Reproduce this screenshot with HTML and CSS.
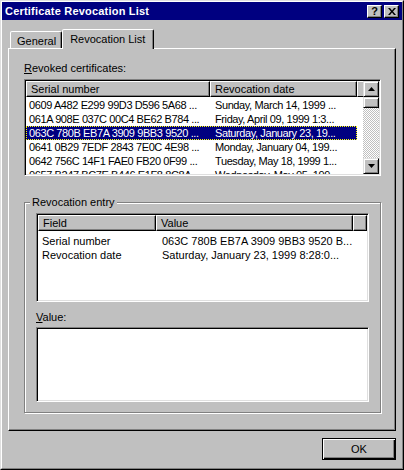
FILE: index.html
```html
<!DOCTYPE html>
<html>
<head>
<meta charset="utf-8">
<link rel="stylesheet" href="styles.css">
</head>
<body>
<div class="window">
  <div class="frame">
    <div class="titlebar">
      <span class="title">Certificate Revocation List</span>
      <div class="tbtns">
        <span class="tbtn">?</span>
        <span class="tbtn"><svg width="8" height="7" viewBox="0 0 8 7"><path d="M0 0h2l2 2.5 2-2.5h2l-3 3.5 3 3.5h-2l-2-2.5-2 2.5h-2l3-3.5z" fill="#000"/></svg></span>
      </div>
    </div>
    <div class="content">
      <div class="tabs">
        <div class="tab">General</div>
        <div class="tab active">Revocation List</div>
      </div>
      <div class="panel">
        <div class="label"><u>R</u>evoked certificates:</div>
        <div class="listbox">
          <div class="lv">
            <div class="lv-head">
              <div class="hcell h1">Serial number</div>
              <div class="hcell h2">Revocation date</div>
              <div class="hcell hfill"></div>
            </div>
            <div class="rows">
              <div class="row"><span class="c1">0609 A482 E299 99D3 D596 5A68 ...</span><span class="c2">Sunday, March 14, 1999 ...</span></div>
              <div class="row"><span class="c1">061A 908E 037C 00C4 BE62 B784 ...</span><span class="c2">Friday, April 09, 1999 1:3...</span></div>
              <div class="row sel"><span class="c1">063C 780B EB7A 3909 9BB3 9520 ...</span><span class="c2">Saturday, January 23, 19...</span></div>
              <div class="row"><span class="c1">0641 0B29 7EDF 2843 7E0C 4E98 ...</span><span class="c2">Monday, January 04, 199...</span></div>
              <div class="row"><span class="c1">0642 756C 14F1 FAE0 FB20 0F99 ...</span><span class="c2">Tuesday, May 18, 1999 1...</span></div>
              <div class="row"><span class="c1">0657 B247 BC7E B446 E1F8 8C8A ...</span><span class="c2">Wednesday, May 05, 199...</span></div>
            </div>
          </div>
          <div class="sb">
            <div class="sbtn"><svg width="7" height="4" viewBox="0 0 7 4"><path d="M3.5 0L7 4H0z" fill="#000"/></svg></div>
            <div class="thumb"></div>
            <div class="track"></div>
            <div class="sbtn"><svg width="7" height="4" viewBox="0 0 7 4"><path d="M0 0h7L3.5 4z" fill="#000"/></svg></div>
          </div>
        </div>
        <fieldset class="group">
          <legend>Revocation entry</legend>
          <div class="lv2">
            <div class="lv-head">
              <div class="hcell f1">Field</div>
              <div class="hcell f2">Value</div>
              <div class="hcell ffill"></div>
            </div>
            <div class="rows2">
              <div class="row"><span class="d1">Serial number</span><span class="d2">063C 780B EB7A 3909 9BB3 9520 B...</span></div>
              <div class="row"><span class="d1">Revocation date</span><span class="d2">Saturday, January 23, 1999 8:28:0...</span></div>
            </div>
          </div>
          <div class="label vlabel"><u>V</u>alue:</div>
          <div class="textbox"></div>
        </fieldset>
      </div>
      <div class="footer">
        <button class="ok">OK</button>
      </div>
    </div>
  </div>
</div>
</body>
</html>
```
FILE: styles.css
```css
* { box-sizing: border-box; }
body {
  margin: 0;
  background: #c0c0c0;
  font-family: "Liberation Sans", Arial, sans-serif;
  font-size: 11px;
  color: #000;
}
.window {
  width: 404px;
  height: 470px;
  border: 1px solid;
  border-color: #dfdfdf #000 #000 #dfdfdf;
  background: #c0c0c0;
}
.frame {
  height: 100%;
  border: 1px solid;
  border-color: #fff #808080 #808080 #fff;
  display: flex;
  flex-direction: column;
}
.titlebar {
  height: 18px;
  background: #000080;
  color: #fff;
  display: flex;
  align-items: center;
  justify-content: space-between;
  padding: 0 3px 0 3px;
}
.title { font-weight: bold; font-size: 11px; letter-spacing: 0.2px; }
.tbtns { display: flex; gap: 2px; }
.tbtn {
  width: 15px;
  height: 13px;
  background: #c0c0c0;
  border: 1px solid;
  border-color: #fff #000 #000 #fff;
  box-shadow: inset -1px -1px #808080;
  display: flex;
  align-items: center;
  justify-content: center;
  color: #000;
  font-weight: bold;
  font-size: 11px;
  line-height: 11px;
}
.content {
  flex: 1;
  padding: 9px 6px 0 6px;
  display: flex;
  flex-direction: column;
}
.tabs {
  display: flex;
  align-items: flex-end;
  height: 19px;
  padding-left: 2px;
  position: relative;
  z-index: 1;
}
.tab {
  height: 17px;
  padding: 2px 5px 0 6px;
  border: 1px solid;
  border-bottom: none;
  border-color: #fff #000 transparent #fff;
  box-shadow: inset -1px 0 #808080;
  border-radius: 2px 2px 0 0;
  display: flex;
  align-items: center;
  background: #c0c0c0;
}
.tab.active {
  height: 20px;
  margin-bottom: -1px;
  padding: 0 8px 1px 7px;
}
.panel {
  height: 383px;
  border: 1px solid;
  border-color: #fff #000 #000 #fff;
  box-shadow: inset -1px -1px #808080;
  padding: 13px 13px 0 15px;
}
.label { line-height: 13px; height: 13px; }
.listbox {
  margin-top: 4px;
  height: 97px;
  width: 357px;
  border: 1px solid;
  border-color: #808080 #fff #fff #808080;
  box-shadow: inset 1px 1px #000, inset -1px -1px #dfdfdf;
  padding: 1px;
  display: flex;
  background: #fff;
}
.lv { flex: 1; overflow: hidden; }
.lv-head { display: flex; height: 16px; }
.hcell {
  flex: none;
  height: 16px;
  background: #c0c0c0;
  border: 1px solid;
  border-color: #fff #000 #000 #fff;
  box-shadow: inset -1px -1px #808080;
  line-height: 14px;
  padding-left: 4px;
  white-space: nowrap;
}
.h1 { width: 184px; }
.h2 { width: 147px; }
.hfill { flex: 1; border-right: none; box-shadow: none; }
.rows { padding-top: 1px; letter-spacing: -0.4px; }
.row { display: flex; height: 14px; line-height: 14px; white-space: nowrap; }
.row span { flex: none; overflow: hidden; }
.c1 { width: 184px; padding-left: 3px; }
.c2 { width: 147px; padding-left: 5px; }
.row.sel {
  width: 331px;
  background: #000080;
  color: #fff;
  outline: 1px dotted #ffff00;
  outline-offset: -1px;
}
.sb { width: 16px; display: flex; flex-direction: column; }
.sbtn, .thumb {
  width: 16px;
  height: 16px;
  background: #c0c0c0;
  border: 1px solid;
  border-color: #dfdfdf #000 #000 #dfdfdf;
  box-shadow: inset 1px 1px #fff, inset -1px -1px #808080;
  display: flex;
  align-items: center;
  justify-content: center;
}
.thumb { height: 11px; }
.track {
  flex: 1;
  background-color: #fff;
  background-image: repeating-conic-gradient(#c0c0c0 0 25%, #fff 0 50%);
  background-size: 2px 2px;
}
.group {
  margin: 20px 0 0 0;
  width: 357px;
  height: 217px;
  border: 1px solid #808080;
  box-shadow: inset 1px 1px #fff, 1px 1px #fff;
  padding: 4px 11px 0 11px;
}
.group legend {
  padding: 0 2px;
  margin-left: -6px;
  line-height: 13px;
  background: #c0c0c0;
}
.lv2 {
  height: 89px;
  width: 333px;
  border: 1px solid;
  border-color: #808080 #fff #fff #808080;
  box-shadow: inset 1px 1px #000, inset -1px -1px #dfdfdf;
  padding: 1px;
  background: #fff;
  overflow: hidden;
}
.f1 { width: 118px; }
.f2 { width: 197px; }
.ffill { flex: 1; }
.rows2 { padding-top: 3px; }
.d1 { width: 118px; padding-left: 4px; }
.d2 { width: 205px; padding-left: 6px; }
.vlabel { margin-top: 9px; padding-left: 0; }
.textbox {
  margin-top: 3px;
  height: 75px;
  width: 333px;
  border: 1px solid;
  border-color: #808080 #fff #fff #808080;
  box-shadow: inset 1px 1px #000, inset -1px -1px #dfdfdf;
  background: #fff;
}
.footer {
  display: flex;
  justify-content: flex-end;
  padding-top: 7px;
}
.ok {
  width: 74px;
  height: 22px;
  margin: 0;
  padding: 0;
  font-family: "Liberation Sans", Arial, sans-serif;
  font-size: 11px;
  color: #000;
  background: #c0c0c0;
  border: 1px solid #000;
  box-shadow: inset 1px 1px #fff, inset -1px -1px #000, inset -2px -2px #808080;
}
```
